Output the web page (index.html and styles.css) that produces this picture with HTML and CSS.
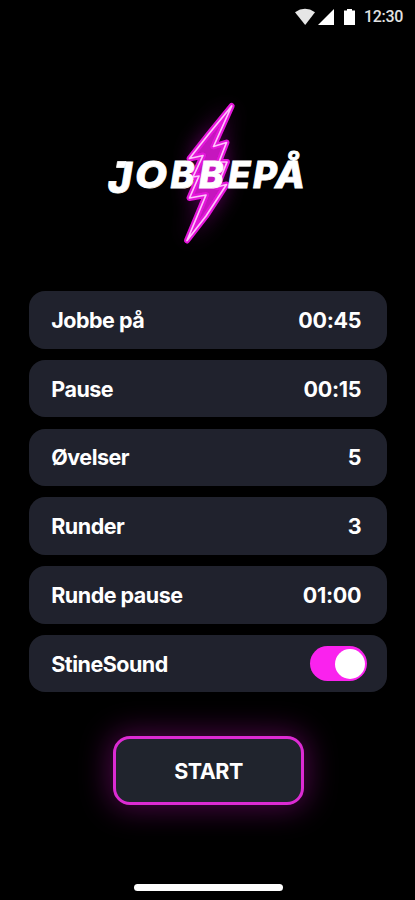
FILE: index.html
```html
<!DOCTYPE html>
<html lang="no">
<head>
<meta charset="utf-8">
<title>Jobbepå</title>
<link rel="stylesheet" href="styles.css">
</head>
<body>
<main class="screen">
  <header class="status">
    <svg class="status-icons" viewBox="0 0 62 20" aria-hidden="true">
      <path d="M0 4.2Q10 -2.5 20 4.2L10.2 17Z" fill="#e6e6e6"/>
      <path d="M39 1V17H23Z"/>
      <path d="M49 2.5H52V1H57V2.5H60V17H49Z"/>
    </svg>
    <span class="clock">12:30</span>
  </header>
  <svg class="logo" viewBox="100 90 215 165" role="img" aria-label="Jobbepå">
    <defs>
      <filter id="halo" x="-150%" y="-50%" width="400%" height="200%"><feGaussianBlur stdDeviation="11"/></filter>
      <filter id="soft" x="-20%" y="-20%" width="140%" height="140%"><feGaussianBlur stdDeviation="0.6"/></filter>
      <path id="bolt" d="M231.7 106L213.5 146.5L226.5 142.5L219 162L227 162L217 187L226.500 184.500L206 216L187 240.500L206 195L189.500 198L199 176L193 177L203 155.500L189.500 158.500L208 135Z"/>
    </defs>
    <use href="#bolt" class="bolt-halo" filter="url(#halo)"/>
    <use href="#bolt" class="bolt-edge" filter="url(#soft)"/>
    <use href="#bolt" class="bolt-line"/>
    <g class="wordmark">
      <text class="cap-j" x="108" y="193" textLength="24" lengthAdjust="spacingAndGlyphs">J</text>
      <path d="M117.500 161.500H126L124.500 167.500H116.500Z"/>
      <text x="135" y="188" textLength="32" lengthAdjust="spacingAndGlyphs">O</text>
      <text x="170.500" y="188" textLength="24" lengthAdjust="spacingAndGlyphs">B</text>
      <text x="199" y="188" textLength="24.500" lengthAdjust="spacingAndGlyphs">B</text>
      <text x="228" y="188" textLength="22.500" lengthAdjust="spacingAndGlyphs">E</text>
      <text x="253" y="188" textLength="24" lengthAdjust="spacingAndGlyphs">P</text>
      <text x="275" y="188" textLength="30" lengthAdjust="spacingAndGlyphs">Å</text>
    </g>
  </svg>
  <section class="settings">
    <div class="row"><span>Jobbe på</span><span class="value">00:45</span></div>
    <div class="row"><span>Pause</span><span class="value">00:15</span></div>
    <div class="row"><span>Øvelser</span><span class="value">5</span></div>
    <div class="row"><span>Runder</span><span class="value">3</span></div>
    <div class="row"><span>Runde pause</span><span class="value">01:00</span></div>
    <div class="row"><span>StineSound</span><span class="toggle"><i class="knob"></i></span></div>
  </section>
  <button class="start">START</button>
  <div class="home-bar"></div>
</main>
</body>
</html>
```
FILE: styles.css
```css
* { box-sizing: border-box; }
body { margin: 0; background: #000; color: #fff; font-family: Inter, "Liberation Sans", sans-serif; }
.screen { width: 415px; height: 900px; display: flex; flex-direction: column; align-items: center; overflow: hidden; }
.status { width: 100%; height: 34px; padding: 0 12px 0 0; display: flex; justify-content: flex-end; align-items: center; gap: 7px; flex: none; }
.status-icons { width: 62px; height: 20px; fill: #fff; margin-top: 1px; }
.clock { font: 500 16px/20px Roboto, sans-serif; color: #e2e2e2; width: 39px; white-space: nowrap; margin-top: -1px; letter-spacing: -.3px; }
.logo { width: 215px; height: 165px; margin: 56px 0 0 0; flex: none; overflow: visible; }
.bolt-halo { fill: #b010b0; opacity: .7; }
.bolt-edge { fill: #c512be; stroke: #e414da; stroke-width: 6; stroke-linejoin: round; }
.bolt-line { fill: none; stroke: #ffc4fb; stroke-width: 1.7; stroke-linejoin: round; }
.wordmark { font: italic 800 37px Inter, sans-serif; fill: #fff; stroke: #fff; stroke-width: .8; }
.cap-j { font-size: 43px; }
.settings { width: 358.5px; margin: 36px 0 0 1px; display: flex; flex-direction: column; gap: 11.25px; flex: none; }
.row { height: 57.5px; border-radius: 16px; background: #20222d; padding: 0 26px 0 22.5px; display: flex; align-items: center; justify-content: space-between; font-size: 21.5px; font-weight: 650; letter-spacing: -.5px; line-height: 24px; }
.value { letter-spacing: -.3px; font-weight: 700; }
.toggle { width: 57px; height: 35px; margin-right: -6px; border-radius: 18px; background: #fa22ee; display: flex; align-items: center; justify-content: flex-end; padding-right: 2px; }
.knob { width: 30px; height: 30px; border-radius: 50%; background: #fff; }
.start { width: 191px; height: 69px; margin: 44px 0 0 2px; flex: none; border: 3px solid #dc2bd3; border-radius: 17px; background: #20242d; color: #fff; font: 650 21.5px Inter, sans-serif; letter-spacing: -.5px; padding: 0; box-shadow: 0 0 30px 4px rgba(190, 15, 180, .38); }
.home-bar { width: 149px; height: 7px; border-radius: 4px; background: #fff; margin: auto 0 9px 2px; flex: none; }
```
